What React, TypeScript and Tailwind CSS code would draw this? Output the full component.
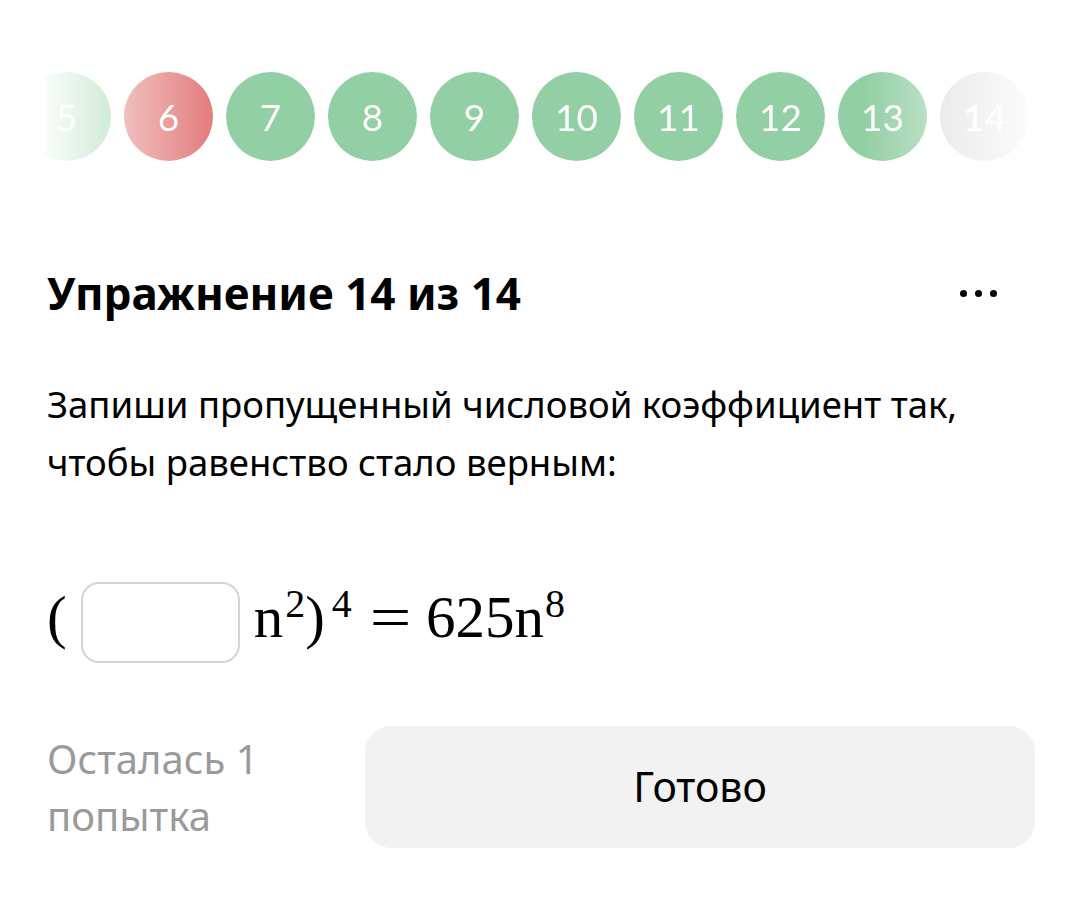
const steps = [
  { n: 5, color: 'bg-[#93cfa4]' },
  { n: 6, color: 'bg-[#e27b7b]' },
  { n: 7, color: 'bg-[#93cfa4]' },
  { n: 8, color: 'bg-[#93cfa4]' },
  { n: 9, color: 'bg-[#93cfa4]' },
  { n: 10, color: 'bg-[#93cfa4]' },
  { n: 11, color: 'bg-[#93cfa4]' },
  { n: 12, color: 'bg-[#93cfa4]' },
  { n: 13, color: 'bg-[#93cfa4]' },
  { n: 14, color: 'bg-[#dcdcdc]' },
];

const fade =
  'linear-gradient(to right, rgba(0,0,0,0.05) 0px, rgba(0,0,0,1) 170px, rgba(0,0,0,1) calc(100% - 170px), rgba(0,0,0,0.05) 100%)';

export default function App() {
  return (
    <div className="min-h-[904px] w-[1080px] bg-white font-['Noto_Sans',sans-serif] text-black">
      <div className="pt-[72px] px-[45px]">
        <div className="overflow-hidden" style={{ maskImage: fade, WebkitMaskImage: fade }}>
          <div className="flex gap-[13px] ml-[-23px]">
            {steps.map((s) => (
              <div
                key={s.n}
                className={`${s.color} w-[89px] h-[89px] shrink-0 rounded-full flex items-center justify-center text-white text-[37px] font-['Lato',sans-serif]`}
              >
                {s.n}
              </div>
            ))}
          </div>
        </div>
      </div>

      <div className="px-[47px]">
        <div className="mt-[102px] flex items-center justify-between">
          <h1 className="text-[44px] font-bold leading-[60px]">Упражнение 14 из 14</h1>
          <div className="flex gap-[8px] mr-[36px]">
            <span className="w-[7px] h-[7px] rounded-full bg-black" />
            <span className="w-[7px] h-[7px] rounded-full bg-black" />
            <span className="w-[7px] h-[7px] rounded-full bg-black" />
          </div>
        </div>

        <p className="mt-[52px] text-[36.5px] leading-[58px]">
          Запиши пропущенный числовой коэффициент так,
          <br />
          чтобы равенство стало верным:
        </p>

        <div className="mt-[90px] flex items-center font-['Liberation_Serif',serif] text-[59px] h-[82px]">
          <span className="mt-[-10px]">(</span>
          <div className="ml-[14px] w-[159px] h-[81px] rounded-[18px] border-2 border-[#d4d4d4]" />
          <span className="ml-[14px] mt-[-10px]">
            n<sup className="text-[40px] ml-[2px]">2</sup>)<sup className="text-[40px] ml-[7px]">4</sup>
          </span>
          <span className="ml-[22px] mt-[-10px] scale-x-125">=</span>
          <span className="ml-[19px] mt-[-10px]">
            625n<sup className="text-[40px] ml-[1px]">8</sup>
          </span>
        </div>

        <div className="mt-[63px] flex items-center gap-[100px]">
          <div className="text-[40px] leading-[57px] text-[#9a9a9a] w-[218px]">
            Осталась 1 попытка
          </div>
          <button className="flex-1 h-[122px] rounded-[26px] bg-[#f2f2f2] text-[41px] mr-[-2px]">
            Готово
          </button>
        </div>
      </div>
    </div>
  );
}
